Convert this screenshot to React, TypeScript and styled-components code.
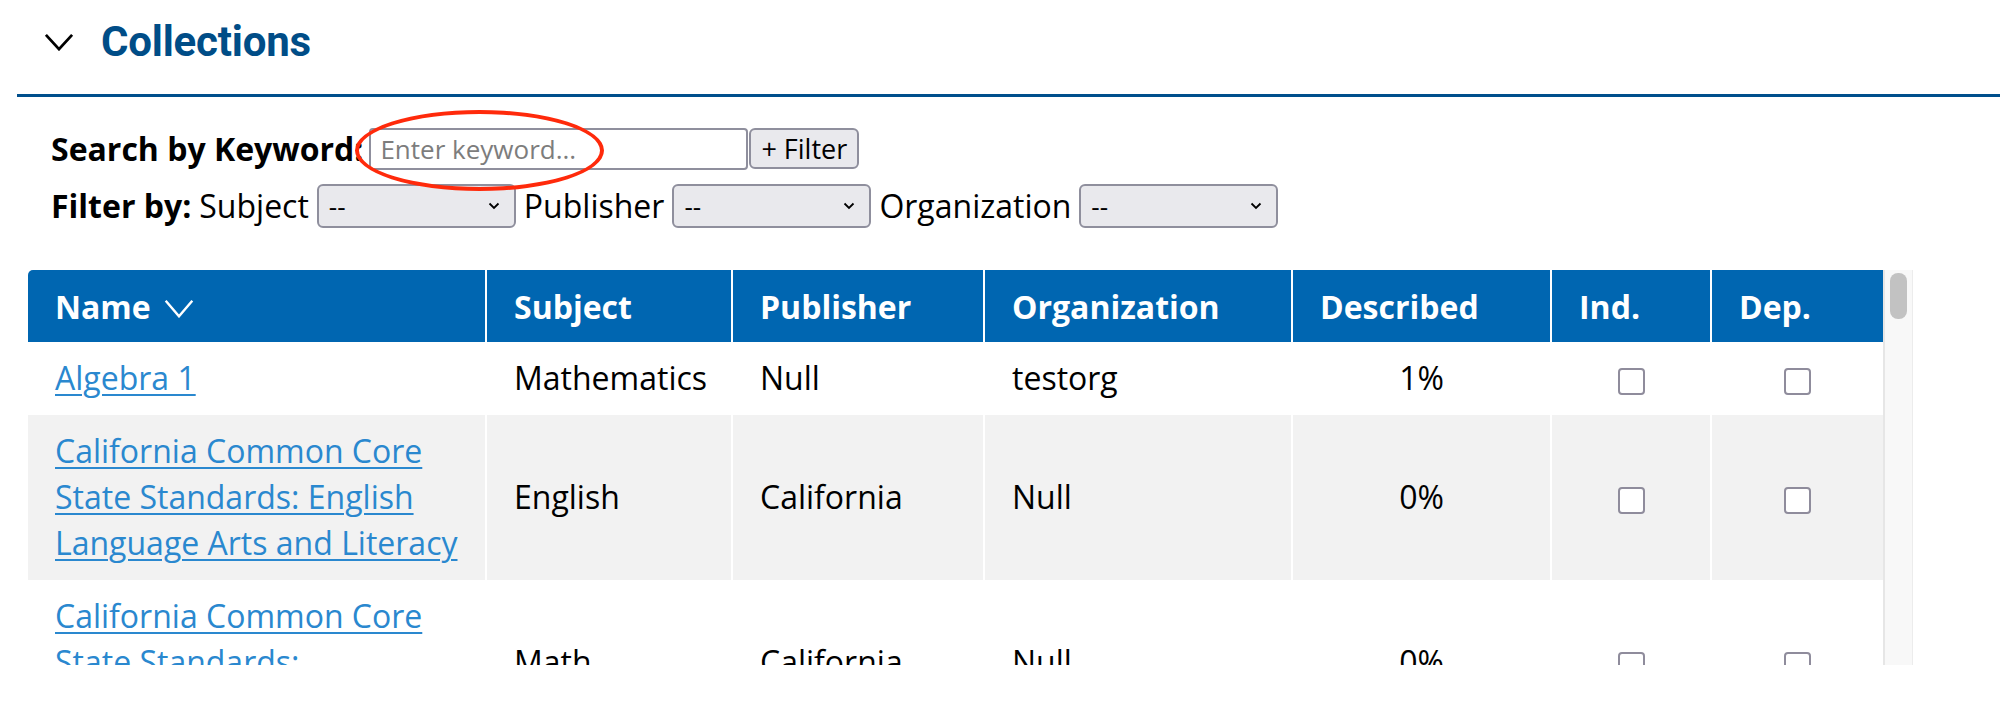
import React from "react";
import styled, { createGlobalStyle } from "styled-components";

const GlobalStyle = createGlobalStyle`
  html, body { margin: 0; padding: 0; background: #fff; }
  body { font-family: "Open Sans", "Noto Sans", sans-serif; color: #000; }
  * { box-sizing: border-box; }
`;

const Page = styled.div`
  width: 2000px;
  height: 715px;
  overflow: hidden;
  background: #fff;
`;

const SectionHeader = styled.div`
  display: flex;
  align-items: center;
  gap: 27px;
  height: 97px;
  margin-left: 17px;
  padding: 3px 0 14px 27px;
  border-bottom: 3px solid #004f8c;
`;

const Title = styled.h2`
  margin: 0;
  font-family: Roboto, "Liberation Sans", sans-serif;
  font-weight: 700;
  font-size: 42px;
  letter-spacing: -0.2px;
  color: #004d87;
`;

const Controls = styled.div`
  position: relative;
  padding: 30px 0 0 51px;
  display: flex;
  flex-direction: column;
  gap: 14px;
`;

const ControlRow = styled.div`
  display: flex;
  align-items: center;
  height: 43px;
  font-size: 32px;
`;

const Label = styled.span<{ $bold?: boolean; $gap?: number }>`
  font-weight: ${(p) => (p.$bold ? 700 : 400)};
  margin-right: ${(p) => p.$gap ?? 0}px;
  white-space: nowrap;
`;

const KeywordInput = styled.input`
  width: 379px;
  height: 42px;
  margin-left: 6px;
  border: 2px solid #8f8f9d;
  border-radius: 4px;
  padding: 0 9px;
  font-family: "Open Sans", sans-serif;
  font-size: 26px;
  color: #000;
  background: #fff;
  outline: none;
  &::placeholder { color: #7d7d7d; }
`;

const FilterButton = styled.button`
  height: 41px;
  margin-left: 1px;
  padding: 0 10px;
  border: 2px solid #8f8f9d;
  border-radius: 6px;
  background: #e9e9ed;
  font-family: "Open Sans", sans-serif;
  font-size: 27px;
  color: #000;
  display: flex;
  align-items: center;
`;

const SelectBox = styled.div`
  width: 199px;
  height: 44px;
  margin: 0 8px;
  border: 2px solid #8f8f9d;
  border-radius: 6px;
  background: #e9e9ed;
  display: flex;
  align-items: center;
  justify-content: space-between;
  padding: 0 14px 0 10px;
  font-size: 26px;
`;

const Ellipse = styled.div`
  position: absolute;
  left: 355px;
  top: 13px;
  width: 249px;
  height: 81px;
  border: 4px solid #ff2a0b;
  border-radius: 50%;
  pointer-events: none;
`;

const TableFrame = styled.div`
  display: flex;
  margin: 43px 0 0 28px;
  height: 395px;
`;

const TableViewport = styled.div`
  width: 1855px;
  height: 100%;
  overflow: hidden;
`;

const ScrollTrack = styled.div`
  width: 30px;
  height: 100%;
  background: #f8f8f8;
  border-left: 2px solid #e6e6e6;
  border-right: 1px solid #ececec;
  padding: 3px 5px 0 5px;
`;

const ScrollThumb = styled.div`
  height: 46px;
  border-radius: 8px;
  background: #c2c2c2;
`;

const Table = styled.table`
  width: 1855px;
  table-layout: fixed;
  border-collapse: separate;
  border-spacing: 0;
  font-size: 32px;
`;

const HeadCell = styled.th`
  background: #0066b1;
  color: #fff;
  font-weight: 700;
  text-align: left;
  height: 72px;
  padding: 0 27px;
  border-left: 2px solid #fff;
  white-space: nowrap;
  &:first-child { border-left: none; border-top-left-radius: 5px; }
`;

const SortIcon = styled.span`
  display: inline-block;
  margin-left: 13px;
  vertical-align: 1px;
`;

const Row = styled.tr<{ $alt?: boolean }>`
  background: ${(p) => (p.$alt ? "#f2f2f2" : "#fff")};
`;

const Cell = styled.td<{ $align?: string }>`
  padding: 13px 27px 14px;
  line-height: 46px;
  vertical-align: middle;
  text-align: ${(p) => p.$align ?? "left"};
  border-left: 2px solid #fff;
  &:first-child { border-left: none; }
`;

const NameLink = styled.a`
  color: #2a88cf;
  text-decoration: underline;
  text-underline-offset: 4px;
  text-decoration-thickness: 2px;
`;

const Check = styled.span`
  display: inline-block;
  width: 27px;
  height: 27px;
  border: 2px solid #8f8c9c;
  border-radius: 4px;
  background: #fff;
  vertical-align: middle;
`;

const Chevron = ({ color, w, h, sw }: { color: string; w: number; h: number; sw: number }) => (
  <svg width={w} height={h} viewBox={`0 0 ${w} ${h}`} fill="none" style={{ display: "block" }}>
    <polyline points={`${sw / 2 + 0.5},${sw / 2 + 0.5} ${w / 2},${h - sw / 2 - 0.5} ${w - sw / 2 - 0.5},${sw / 2 + 0.5}`} stroke={color} strokeWidth={sw} />
  </svg>
);

const SmallChevron = () => (
  <svg width="12" height="8" viewBox="0 0 12 8" fill="none">
    <polyline points="1.5,1.5 6,6 10.5,1.5" stroke="#000" strokeWidth="1.8" />
  </svg>
);

const rows = [
  { name: "Algebra 1", subject: "Mathematics", publisher: "Null", org: "testorg", desc: "1%" },
  { name: "California Common Core State Standards: English Language Arts and Literacy", subject: "English", publisher: "California", org: "Null", desc: "0%" },
  { name: "California Common Core State Standards: Mathematics", subject: "Math", publisher: "California", org: "Null", desc: "0%" },
  { name: "Common Core State Standards for English Language Arts", subject: "English", publisher: "CCSSO", org: "Null", desc: "0%" },
  { name: "Common Core State Standards for Mathematics", subject: "Mathematics", publisher: "CCSSO", org: "Null", desc: "0%" },
  { name: "Geometry", subject: "Mathematics", publisher: "Null", org: "testorg", desc: "0%" },
];

export default function App() {
  return (
    <Page>
      <GlobalStyle />
      <SectionHeader>
        <Chevron color="#000" w={30} h={18} sw={2.8} />
        <Title>Collections</Title>
      </SectionHeader>
      <Controls>
        <ControlRow>
          <Label $bold>Search by Keyword:</Label>
          <KeywordInput placeholder="Enter keyword..." />
          <FilterButton>+ Filter</FilterButton>
        </ControlRow>
        <ControlRow>
          <Label $bold $gap={8}>Filter by:</Label>
          <Label>Subject</Label>
          <SelectBox><span>--</span><SmallChevron /></SelectBox>
          <Label>Publisher</Label>
          <SelectBox><span>--</span><SmallChevron /></SelectBox>
          <Label>Organization</Label>
          <SelectBox><span>--</span><SmallChevron /></SelectBox>
        </ControlRow>
        <Ellipse />
      </Controls>
      <TableFrame>
        <TableViewport>
          <Table>
            <colgroup>
              <col style={{ width: 457 }} />
              <col style={{ width: 246 }} />
              <col style={{ width: 252 }} />
              <col style={{ width: 308 }} />
              <col style={{ width: 259 }} />
              <col style={{ width: 160 }} />
              <col style={{ width: 173 }} />
            </colgroup>
            <thead>
              <tr>
                <HeadCell>
                  Name
                  <SortIcon><Chevron color="#fff" w={30} h={19} sw={2.4} /></SortIcon>
                </HeadCell>
                <HeadCell>Subject</HeadCell>
                <HeadCell>Publisher</HeadCell>
                <HeadCell>Organization</HeadCell>
                <HeadCell>Described</HeadCell>
                <HeadCell>Ind.</HeadCell>
                <HeadCell>Dep.</HeadCell>
              </tr>
            </thead>
            <tbody>
              {rows.map((r, i) => (
                <Row key={i} $alt={i % 2 === 1}>
                  <Cell><NameLink href="#">{r.name}</NameLink></Cell>
                  <Cell>{r.subject}</Cell>
                  <Cell>{r.publisher}</Cell>
                  <Cell>{r.org}</Cell>
                  <Cell $align="center">{r.desc}</Cell>
                  <Cell $align="center"><Check /></Cell>
                  <Cell $align="center"><Check /></Cell>
                </Row>
              ))}
            </tbody>
          </Table>
        </TableViewport>
        <ScrollTrack>
          <ScrollThumb />
        </ScrollTrack>
      </TableFrame>
    </Page>
  );
}
